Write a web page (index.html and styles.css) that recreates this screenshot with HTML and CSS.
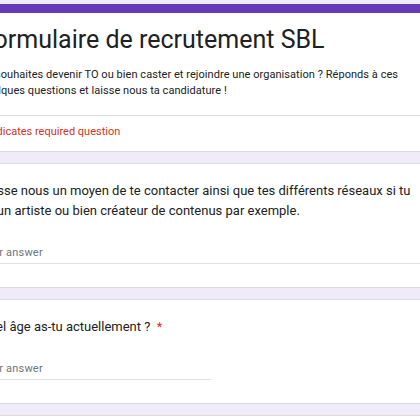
FILE: index.html
```html
<!DOCTYPE html>
<html lang="fr">
<head>
<meta charset="utf-8">
<title>Formulaire de recrutement SBL</title>
<link rel="stylesheet" href="styles.css">
</head>
<body>
<main class="page">
  <section class="card header-card">
    <div class="header-main">
      <h1 class="form-title">Formulaire de recrutement SBL</h1>
      <p class="form-desc">Tu souhaites devenir TO ou bien caster et rejoindre une organisation ? Réponds à ces quelques questions et laisse nous ta candidature !</p>
    </div>
    <div class="required-note">* Indicates required question</div>
  </section>

  <section class="card question">
    <div class="q-title">Laisse nous un moyen de te contacter ainsi que tes différents réseaux si tu es un artiste ou bien créateur de contenus par exemple.</div>
    <div class="answer answer-long">Your answer</div>
  </section>

  <section class="card question">
    <div class="q-title">Quel âge as-tu actuellement ? <span class="star">*</span></div>
    <div class="answer answer-short">Your answer</div>
  </section>

  <section class="card question next-card"></section>
</main>
</body>
</html>
```

FILE: styles.css
```css
html, body {
  margin: 0;
  padding: 0;
}
body {
  background: #f0ebf8;
  overflow: hidden;
  width: 420px;
  height: 420px;
  font-family: Roboto, "Liberation Sans", sans-serif;
  color: #202124;
}
.page {
  margin-left: -40px;
  width: 500px;
  padding-top: 4px;
}
.card {
  background: #fff;
  border: 1px solid #dadce0;
  border-radius: 8px;
  margin-bottom: 11px;
}
.header-card {
  border-top: 9px solid #673ab7;
}
.header-main {
  padding: 12px 19px 16px;
  border-bottom: 1px solid #dadce0;
}
.form-title {
  margin: 0;
  font-weight: 400;
  font-size: 25px;
  line-height: 30px;
  color: #202124;
}
.form-desc {
  margin: 12px 0 0;
  font-size: 11px;
  line-height: 16px;
  letter-spacing: 0.05px;
  width: 440px;
  color: #202124;
}
.required-note {
  padding: 8px 19px 11px;
  font-size: 11px;
  line-height: 16px;
  color: #d93025;
}
.question {
  padding: 17px 19px 23px;
}
.q-title {
  font-size: 13px;
  line-height: 20px;
  color: #202124;
  width: 445px;
}
.star {
  color: #d93025;
  margin-left: 3px;
}
.answer {
  margin-top: 24px;
  font-size: 11px;
  line-height: 16px;
  padding-bottom: 2px;
  color: #70757a;
  letter-spacing: 0.2px;
  border-bottom: 1px solid #e0e0e0;
}
.answer-short {
  width: 231px;
}
.next-card {
  min-height: 60px;
}
```
